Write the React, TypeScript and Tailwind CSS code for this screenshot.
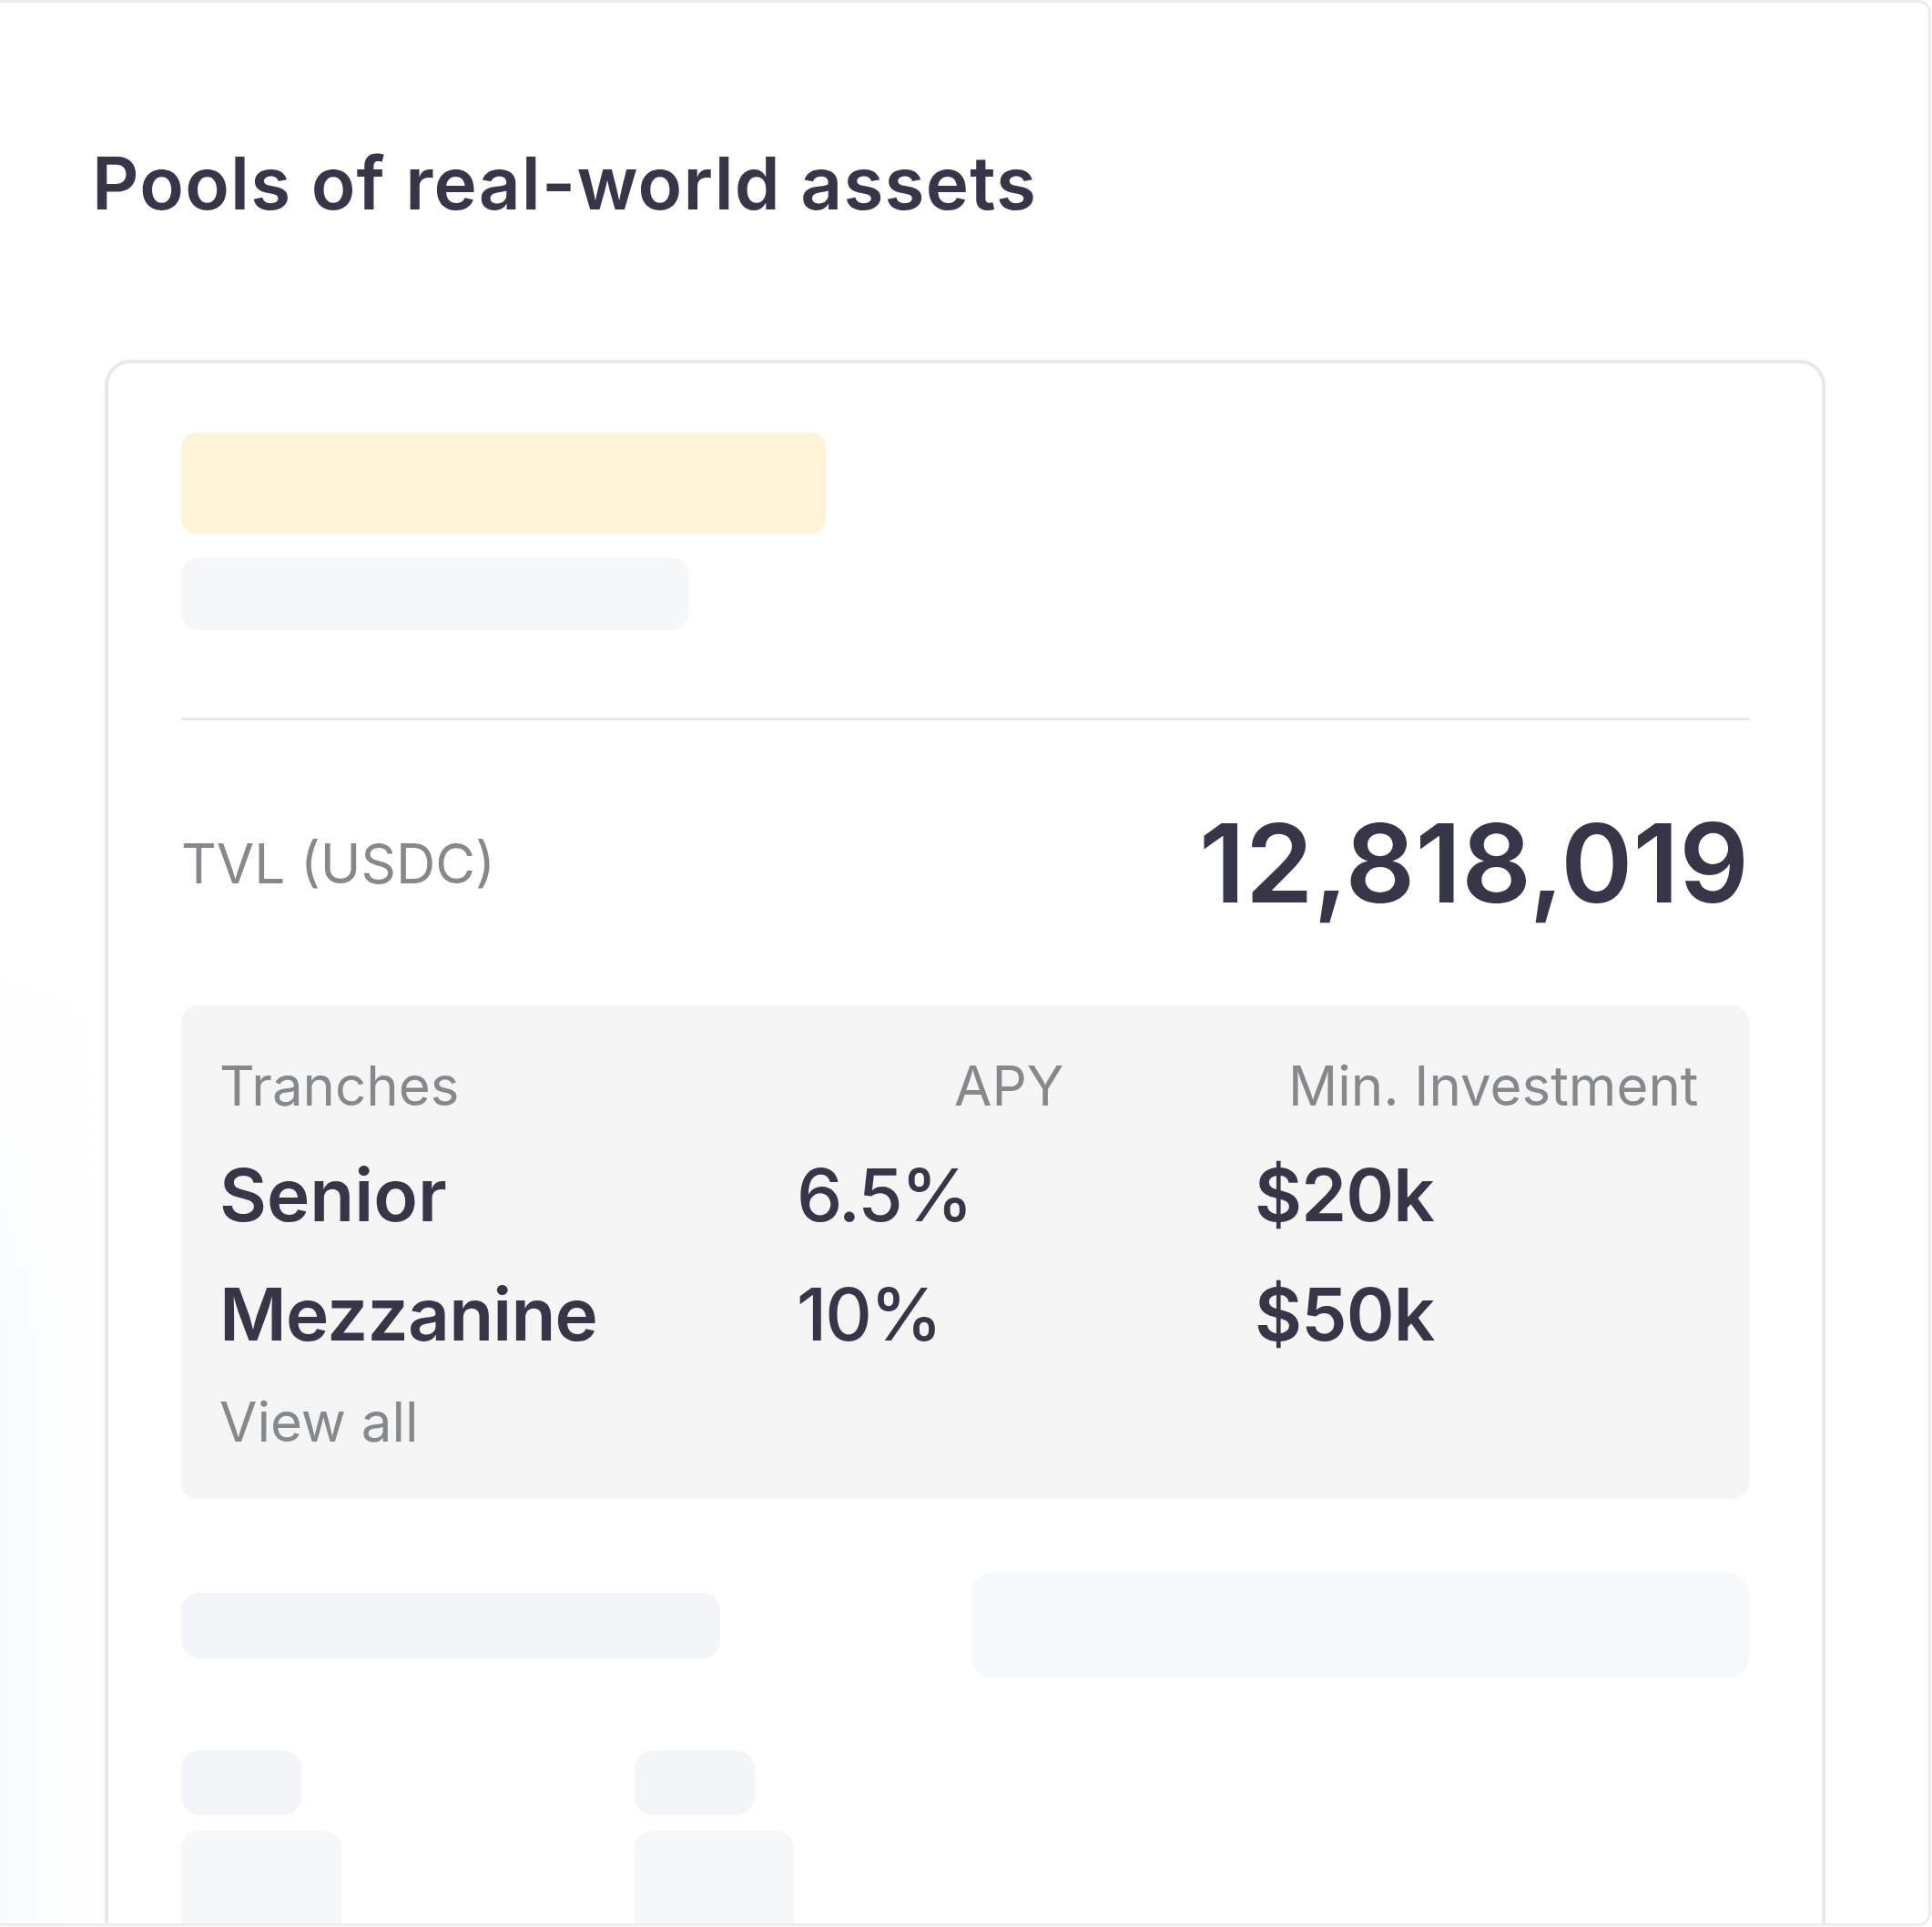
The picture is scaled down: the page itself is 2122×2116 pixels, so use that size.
import React from "react";

const dark = "text-[#363648]";
const muted = "text-[#86898c]";

function Skeleton({ className }: { className: string }) {
  return <div className={className} />;
}

export default function App(): JSX.Element {
  return (
    <div className="h-[2116px] w-[2122px] overflow-hidden bg-white font-['Inter',sans-serif]">
      <div className="relative h-[2115px] w-[2121px] overflow-hidden rounded-r-[14px] border-y-[3px] border-r-[3px] border-[#ececec] bg-white">
        {/* faint glow down the left edge */}
        <div className="absolute bottom-0 left-0 h-[1050px] w-[110px] bg-[linear-gradient(90deg,#f8fafc,rgba(255,255,255,0))] [mask-image:linear-gradient(180deg,transparent,black_40%)]" />

        <h1 className={`relative pl-[101px] pt-[158px] text-[80px] font-semibold leading-none tracking-[0.015em] ${dark}`}>
          Pools of real-world assets
        </h1>

        <div className="relative ml-[115px] mt-[154px] h-[1800px] w-[1890px] rounded-[28px] border-[4px] border-[#e9e9e9] bg-white px-[80px] pt-[76px]">
          <Skeleton className="h-[111px] w-[708px] rounded-[16px] bg-[#fef3d7]" />
          <Skeleton className="mt-[26px] h-[80px] w-[557px] rounded-[20px] bg-[#f6f7f9]" />

          <div className="mt-[96px] h-[3px] w-full bg-[#e8e8e8]" />

          <div className="mt-[97px] flex items-center justify-between">
            <span className={`text-[60px] leading-none ${muted}`}>TVL (USDC)</span>
            <span className={`text-[120px] font-semibold leading-none ${dark}`}>12,818,019</span>
          </div>

          <div className="mt-[96px] rounded-[18px] bg-[#f5f5f6] pb-[55px] pl-[42px] pr-[54px] pt-[58px]">
            <div className="grid grid-cols-[634px_503px_1fr]">
              <span className={`text-[60px] leading-none ${muted}`}>Tranches</span>
              <span className={`pl-[173px] text-[60px] leading-none ${muted}`}>APY</span>
              <span className={`pl-[37px] text-[60px] leading-none ${muted}`}>Min. Investment</span>

              <span className={`mt-[50px] text-[80px] font-semibold leading-none ${dark}`}>Senior</span>
              <span className={`mt-[50px] text-[80px] font-medium leading-none tracking-[-0.025em] ${dark}`}>6.5%</span>
              <span className={`mt-[50px] text-[80px] font-semibold leading-none tracking-[-0.01em] ${dark}`}>$20k</span>

              <span className={`mt-[51px] text-[80px] font-semibold leading-none tracking-[-0.01em] ${dark}`}>Mezzanine</span>
              <span className={`mt-[51px] text-[80px] font-medium leading-none tracking-[-0.025em] ${dark}`}>10%</span>
              <span className={`mt-[51px] text-[80px] font-semibold leading-none tracking-[-0.01em] ${dark}`}>$50k</span>
            </div>
            <div className={`mt-[48px] text-[60px] leading-none ${muted}`}>View all</div>
          </div>

          <div className="mt-[81px] flex items-center justify-between">
            <Skeleton className="h-[72px] w-[592px] rounded-[20px] bg-[#f3f5f8]" />
            <Skeleton className="h-[115px] w-[854px] rounded-[22px] bg-[#f6f8f9]" />
          </div>

          <div className="mt-[80px] grid grid-cols-[498px_1fr]">
            <div className="flex flex-col gap-[17px]">
              <Skeleton className="h-[71px] w-[132px] rounded-[20px] bg-[#f3f5f8]" />
              <Skeleton className="h-[200px] w-[176px] rounded-[20px] bg-[#f6f7f9]" />
            </div>
            <div className="flex flex-col gap-[17px]">
              <Skeleton className="h-[71px] w-[132px] rounded-[20px] bg-[#f3f5f8]" />
              <Skeleton className="h-[200px] w-[175px] rounded-[20px] bg-[#f6f7f9]" />
            </div>
          </div>
        </div>
      </div>
    </div>
  );
}
